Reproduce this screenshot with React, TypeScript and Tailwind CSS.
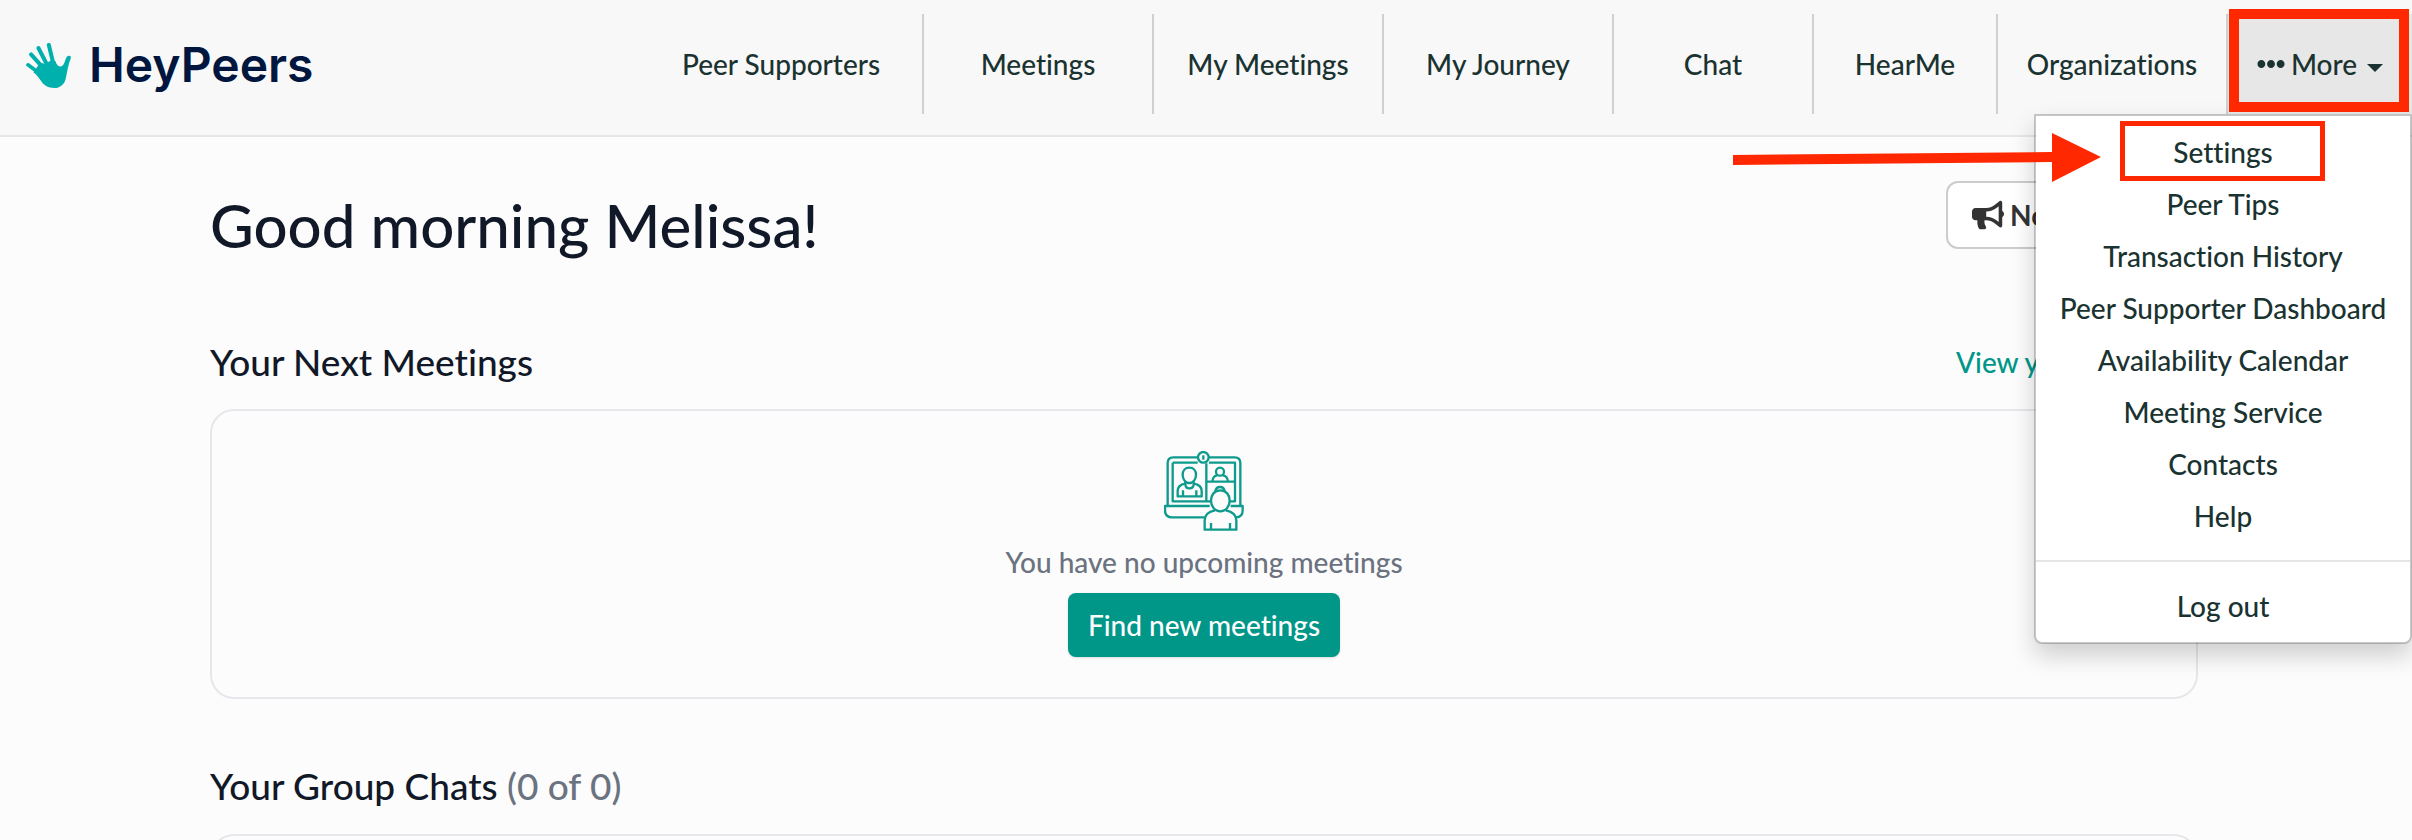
import type { ReactNode } from "react";
import { FaBullhorn, FaEllipsisH } from "react-icons/fa";

const navItems = [
  { label: "Peer Supporters", width: "w-[284px]" },
  { label: "Meetings", width: "w-[230px]" },
  { label: "My Meetings", width: "w-[230px]" },
  { label: "My Journey", width: "w-[230px]" },
  { label: "Chat", width: "w-[200px]" },
  { label: "HearMe", width: "w-[184px]" },
  { label: "Organizations", width: "w-[230px]" },
];

const menuItems = [
  "Settings",
  "Peer Tips",
  "Transaction History",
  "Peer Supporter Dashboard",
  "Availability Calendar",
  "Meeting Service",
  "Contacts",
  "Help",
];

function HandIcon() {
  return (
    <svg viewBox="78 126 134 134" className="size-[45px]" aria-hidden="true">
      <g stroke="#00b0ac" strokeLinecap="round" fill="none">
        <path d="M84 191 L120 218" strokeWidth="11" />
        <path d="M93 160 L132 203" strokeWidth="12" />
        <path d="M115 141 L143 195" strokeWidth="12" />
        <path d="M146 132 L160 190" strokeWidth="12" />
      </g>
      <path
        fill="#00b0ac"
        d="M206 164 C211 164 213 168 211 172 C203 192 201 212 196 233 C192 249 180 260 162 260 C144 260 132 253 124 241 C117 230 110 221 100 213 L120 185 L135 188 L152 178 L166 180 C168 188 173 195 179 196 C186 197 190 190 194 180 C197 172 199 164 206 164 Z"
      />
    </svg>
  );
}

function VideoMeetingIcon() {
  return (
    <svg
      viewBox="72 62 240 240"
      className="size-20"
      fill="none"
      stroke="#0e9a8c"
      strokeWidth="7"
      strokeLinejoin="round"
      aria-hidden="true"
    >
      <path d="M83 226 V98 Q83 81 100 81 H173 M207 81 H284 Q301 81 301 98 V226" />
      <path d="M98 97 H173 M207 97 H285 V213 H268 M212 213 H98 Z M98 97 V213" />
      <path d="M199 99 V213 M199 154 H283" />
      <circle cx="190" cy="81" r="16" />
      <path d="M190 75 V88" />
      <path d="M148 112 C135 112 128 121 128 133 C128 148 137 158 148 158 C159 158 168 148 168 133 C168 121 161 112 148 112 Z" />
      <path d="M136 154 V161 Q136 174 148 174 Q161 174 161 161 V154" />
      <path d="M136 160 Q113 164 113 182 V198 H185 V182 Q185 164 161 160 M129 180 V198 M169 180 V198" />
      <circle cx="240" cy="124" r="12" />
      <path d="M217 153 Q219 136 232 135 M248 135 Q262 136 264 153" />
      <path d="M226 183 Q228 170 240 170 Q252 170 254 183" />
      <path d="M241 180 C223 180 213 194 213 211 C213 229 225 243 241 243 C257 243 269 229 269 211 C269 194 259 180 241 180 Z" />
      <path d="M209 227 H75 V240 Q75 261 96 261 H194 M272 227 H308 V240 Q308 261 288 261" />
      <path d="M225 240 Q194 246 194 270 V298 H289 V270 Q289 246 257 240 M213 278 V298 M270 278 V298" />
    </svg>
  );
}

function MenuLink({ children }: { children: ReactNode }) {
  return (
    <a href="#" className="block py-1.5 text-center whitespace-nowrap">
      {children}
    </a>
  );
}

function MoreMenu() {
  return (
    <div className="absolute top-full right-0 z-10 w-[378px] rounded-b-lg border-2 border-black/20 bg-white bg-clip-padding py-2.5 shadow-[0_12px_24px_rgba(0,0,0,0.18)]">
      {menuItems.map((item) => (
        <div key={item} className="relative">
          <MenuLink>{item}</MenuLink>
          {item === "Settings" && (
            <span className="pointer-events-none absolute -top-[5px] left-[84px] h-[60px] w-[205px] border-[5px] border-[#ff2800]" />
          )}
        </div>
      ))}
      <hr className="my-[18px] border-t-2 border-[#e5e5e5]" />
      <MenuLink>Log out</MenuLink>
      <svg
        viewBox="0 0 368 50"
        className="pointer-events-none absolute top-4 -left-[303px] h-[50px] w-[368px]"
        fill="#ff2800"
        aria-hidden="true"
      >
        <path d="M0 23 L319 20 V1 L368 25 L319 50 V30 L0 33 Z" />
      </svg>
    </div>
  );
}

export default function App() {
  return (
    <div className="h-screen min-h-[840px] overflow-hidden bg-[#fcfcfc] font-['Lato',sans-serif] text-[28px] leading-10 font-medium text-[#1a3331] [font-variant-ligatures:none]">
      <header className="flex items-start justify-between border-b-2 border-[#e7e7e7] bg-[#f8f8f8] pt-3.5 pb-[21px]">
        <a href="#" className="flex h-[100px] items-center gap-[18px] pt-0.5 pl-[26px]">
          <HandIcon />
          <span className="font-['Inter',sans-serif] text-[48px] leading-[56px] font-semibold text-[#00163f]">
            HeyPeers
          </span>
        </a>
        <nav className="flex">
          {navItems.map(({ label, width }) => (
            <a
              key={label}
              href="#"
              className={`${width} flex h-[100px] items-center justify-center border-r-2 border-[#d0d0d0]`}
            >
              {label}
            </a>
          ))}
          <div className="relative w-[184px]">
            <button
              type="button"
              aria-expanded="true"
              className="flex h-[100px] w-full items-center justify-center bg-[#e7e7e7]"
            >
              <FaEllipsisH className="mr-1.5 size-7" />
              More
              <span className="mt-2 ml-2.5 border-x-8 border-t-8 border-x-transparent border-t-[#1a3331]" />
            </button>
            <MoreMenu />
            <span className="pointer-events-none absolute -top-[5px] left-px z-20 h-[103px] w-[180px] border-[10px] border-[#ff2800]" />
          </div>
        </nav>
      </header>

      <main className="pr-[214px] pl-[210px]">
        <div className="flex items-start justify-between pt-11">
          <h1 className="text-[60px] leading-[88px] text-[#111827]">Good morning Melissa!</h1>
          <button
            type="button"
            className="flex h-[68px] w-[252px] items-center gap-1.5 rounded-xl border-2 border-[#ccc] bg-white pl-6 font-bold whitespace-nowrap text-[#333]"
          >
            <FaBullhorn className="size-8" />
            Notifications
          </button>
        </div>

        <section>
          <div className="mt-[66px] flex items-center justify-between">
            <h2 className="text-[37px] leading-[54px] text-[#111827]">Your Next Meetings</h2>
            <a href="#" className="w-[242px] whitespace-nowrap text-[#009688]">
              View yours
            </a>
          </div>
          <div className="mt-5 flex flex-col items-center rounded-3xl border-2 border-[#e5e7eb] pt-10 pb-10">
            <VideoMeetingIcon />
            <p className="mt-[11px] text-[#6b7280]">You have no upcoming meetings</p>
            <button
              type="button"
              className="mt-[11px] h-16 rounded-lg bg-[#009688] px-5 text-white shadow-sm"
            >
              Find new meetings
            </button>
          </div>
        </section>

        <section className="mt-[60px]">
          <h2 className="text-[37px] leading-[54px] text-[#111827]">
            Your Group Chats <span className="text-[#6b7280]">(0 of 0)</span>
          </h2>
          <div className="mt-[21px] h-40 rounded-3xl border-2 border-[#e5e7eb]" />
        </section>
      </main>
    </div>
  );
}
